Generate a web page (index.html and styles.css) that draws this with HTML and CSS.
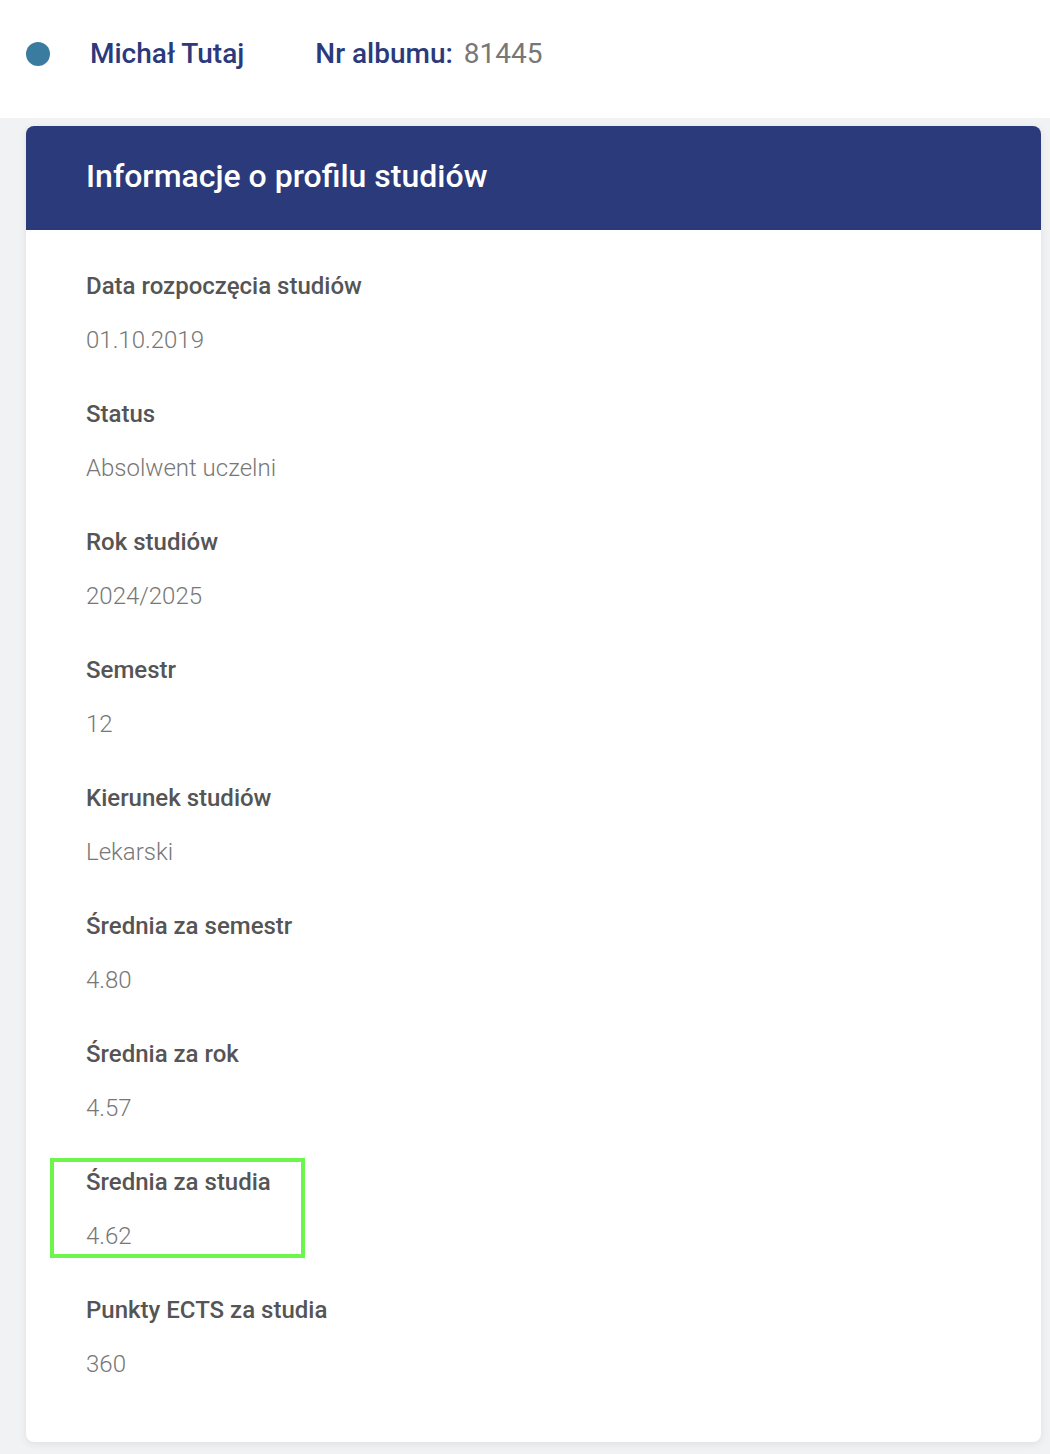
FILE: index.html
```html
<!DOCTYPE html>
<html lang="pl">
<head>
    <meta charset="UTF-8">
    <meta name="viewport" content="width=device-width, initial-scale=1.0">
    <title>Informacje o profilu studiów</title>
    <link rel="stylesheet" href="styles.css">
</head>
<body>
    <div class="topbar">
        <span class="dot"></span>
        <span class="student-name">Michał Tutaj</span>
        <span class="album">
            <span class="album-label">Nr albumu:</span>
            <span class="album-number">81445</span>
        </span>
    </div>

    <div class="page">
        <div class="card">
            <div class="card-header">
                <h1>Informacje o profilu studiów</h1>
            </div>
            <div class="card-body">
                <div class="field">
                    <div class="field-label">Data rozpoczęcia studiów</div>
                    <div class="field-value">01.10.2019</div>
                </div>
                <div class="field">
                    <div class="field-label">Status</div>
                    <div class="field-value">Absolwent uczelni</div>
                </div>
                <div class="field">
                    <div class="field-label">Rok studiów</div>
                    <div class="field-value">2024/2025</div>
                </div>
                <div class="field">
                    <div class="field-label">Semestr</div>
                    <div class="field-value">12</div>
                </div>
                <div class="field">
                    <div class="field-label">Kierunek studiów</div>
                    <div class="field-value">Lekarski</div>
                </div>
                <div class="field">
                    <div class="field-label">Średnia za semestr</div>
                    <div class="field-value">4.80</div>
                </div>
                <div class="field">
                    <div class="field-label">Średnia za rok</div>
                    <div class="field-value">4.57</div>
                </div>
                <div class="field highlighted">
                    <div class="field-label">Średnia za studia</div>
                    <div class="field-value">4.62</div>
                    <div class="highlight-box"></div>
                </div>
                <div class="field">
                    <div class="field-label">Punkty ECTS za studia</div>
                    <div class="field-value">360</div>
                </div>
            </div>
        </div>
    </div>
</body>
</html>
```

FILE: styles.css
```css
body {
    font-family: Roboto, "Liberation Sans", sans-serif;
    margin: 0;
    background-color: #f1f2f4;
}
.topbar {
    display: flex;
    align-items: center;
    height: 107px;
    padding: 0 0 11px 26px;
    background-color: white;
}
.dot {
    width: 24px;
    height: 24px;
    border-radius: 50%;
    background-color: #3a7ca0;
    margin-right: 40px;
}
.student-name {
    color: #2b3a7b;
    font-size: 28px;
    font-weight: 500;
    margin-right: 71px;
}
.album-label {
    color: #2b3a7b;
    font-size: 28px;
    font-weight: 500;
}
.album-number {
    color: #777;
    font-size: 28px;
    margin-left: 7px;
}
.page {
    padding: 8px 9px 12px 26px;
}
.card {
    background-color: white;
    border-radius: 8px;
    box-shadow: 0 2px 8px rgba(0, 0, 0, 0.08);
    overflow: hidden;
}
.card-header {
    background-color: #2b3a7b;
    height: 100px;
    display: flex;
    align-items: center;
    padding: 0 0 4px 60px;
}
.card-header h1 {
    margin: 0;
    color: white;
    font-size: 32px;
    font-weight: 500;
}
.card-body {
    padding: 40px 60px 48px;
}
.field {
    position: relative;
    height: 128px;
}
.field:last-child {
    height: 100px;
}
.field-label {
    color: #555;
    font-size: 24px;
    font-weight: 500;
    line-height: 32px;
}
.field-value {
    color: #777;
    font-size: 24px;
    font-weight: 300;
    line-height: 32px;
    margin-top: 22px;
}
.highlight-box {
    position: absolute;
    left: -36px;
    top: -8px;
    width: 247px;
    height: 92px;
    border: 4px solid #6ef54c;
}
```
